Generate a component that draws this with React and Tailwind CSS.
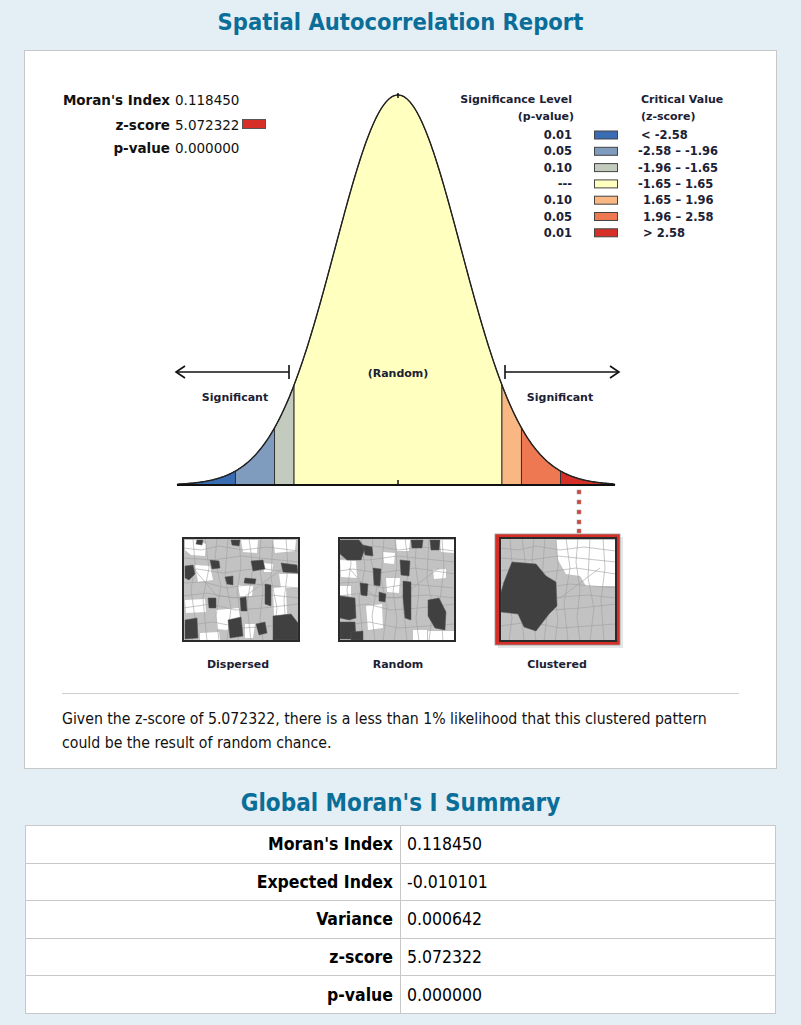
import React from 'react';

// bell curve geometry (page coordinates, svg viewBox starts at the card's content box)
const CX = 398;
const SX = 63;
const BASE = 485;
const PEAK = 390;

const px = (z) => CX + SX * z;
const py = (z) => BASE - PEAK * Math.exp((-z * z) / 2);

const bandPath = (z1, z2) => {
    let d = `M${px(z1)},${BASE} L${px(z1)},${py(z1)}`;
    for (let z = z1; z < z2; z += 0.02) d += ` L${px(z).toFixed(2)},${py(z).toFixed(2)}`;
    d += ` L${px(z2)},${py(z2)} L${px(z2)},${BASE} Z`;
    return d;
};

const curvePath = () => {
    let d = `M${px(-3.5)},${py(-3.5)}`;
    for (let z = -3.5; z <= 3.44; z += 0.02) d += ` L${px(z).toFixed(2)},${py(z).toFixed(2)}`;
    return d;
};

const bands = [
    { from: -3.5, to: -2.58, fill: '#3a6cb4' },
    { from: -2.58, to: -1.96, fill: '#7f9bbd' },
    { from: -1.96, to: -1.65, fill: '#c3cbbf' },
    { from: -1.65, to: 1.65, fill: '#ffffc0' },
    { from: 1.65, to: 1.96, fill: '#f9b784' },
    { from: 1.96, to: 2.58, fill: '#ee7852' },
    { from: 2.58, to: 3.44, fill: '#d62f27' },
];

const legend = [
    { p: '0.01', fill: '#3a6cb4', z: '< -2.58', zx: 641 },
    { p: '0.05', fill: '#7f9bbd', z: '-2.58 – -1.96', zx: 638 },
    { p: '0.10', fill: '#c3cbbf', z: '-1.96 – -1.65', zx: 638 },
    { p: '---', fill: '#ffffc0', z: '-1.65 – 1.65', zx: 638 },
    { p: '0.10', fill: '#f9b784', z: '1.65 – 1.96', zx: 643 },
    { p: '0.05', fill: '#ee7852', z: '1.96 – 2.58', zx: 643 },
    { p: '0.01', fill: '#d62f27', z: '> 2.58', zx: 643 },
];

const toPts = (arr) => arr.map(([x, y]) => `${x},${y}`).join(' ');

// map thumbnails, local coords 0..116 x 0..103
const dispersed = {
    dark: [
        [[48, 2], [57, 2], [56, 8], [49, 7]],
        [[14, 2], [20, 2], [19, 7], [13, 6]],
        [[2, 28], [10, 27], [12, 36], [6, 42], [2, 40]],
        [[27, 22], [36, 23], [37, 30], [29, 31]],
        [[68, 23], [80, 22], [82, 31], [70, 33]],
        [[98, 25], [114, 27], [115, 35], [100, 34]],
        [[42, 39], [50, 38], [50, 47], [44, 46]],
        [[62, 40], [73, 41], [72, 46], [61, 45]],
        [[82, 46], [88, 47], [88, 68], [82, 66]],
        [[25, 60], [33, 60], [33, 70], [26, 70]],
        [[57, 60], [63, 59], [64, 73], [58, 73]],
        [[2, 82], [14, 80], [15, 100], [2, 101]],
        [[45, 82], [58, 79], [60, 98], [47, 100]],
        [[73, 86], [82, 84], [84, 95], [76, 97]],
        [[90, 78], [108, 76], [115, 85], [115, 102], [90, 102]],
    ],
    white: [
        [[2, 2], [12, 2], [23, 6], [22, 18], [8, 17], [2, 12]],
        [[58, 2], [75, 2], [74, 15], [60, 14]],
        [[90, 2], [113, 2], [112, 13], [92, 15]],
        [[12, 27], [27, 28], [30, 42], [15, 44]],
        [[80, 25], [90, 26], [89, 34], [81, 34]],
        [[96, 36], [115, 36], [115, 50], [98, 50]],
        [[90, 50], [103, 49], [104, 76], [91, 78]],
        [[2, 62], [22, 61], [23, 74], [3, 75]],
        [[33, 72], [56, 70], [57, 80], [44, 92], [34, 91]],
        [[55, 47], [70, 48], [69, 58], [57, 58]],
        [[17, 95], [36, 94], [37, 102], [17, 102]],
        [[62, 86], [72, 86], [70, 100], [62, 100]],
    ],
};

const random = {
    dark: [
        [[1, 2], [20, 2], [26, 10], [22, 22], [8, 22], [1, 16]],
        [[24, 7], [33, 9], [34, 18], [26, 17]],
        [[72, 2], [84, 2], [83, 10], [73, 10]],
        [[91, 2], [101, 2], [100, 12], [92, 12]],
        [[34, 30], [42, 31], [41, 48], [35, 47]],
        [[61, 22], [71, 23], [70, 38], [62, 37]],
        [[21, 45], [29, 46], [28, 58], [22, 57]],
        [[40, 54], [47, 56], [46, 64], [40, 63]],
        [[64, 43], [72, 44], [72, 82], [66, 80], [64, 60]],
        [[1, 58], [16, 60], [17, 80], [10, 82], [1, 80]],
        [[1, 84], [16, 84], [17, 101], [1, 101]],
        [[89, 62], [100, 60], [107, 74], [106, 92], [96, 90], [89, 78]],
        [[12, 94], [24, 93], [24, 102], [12, 102]],
    ],
    white: [
        [[57, 2], [71, 2], [70, 13], [58, 13]],
        [[101, 2], [116, 2], [116, 15], [102, 14]],
        [[1, 22], [17, 23], [18, 40], [2, 39]],
        [[47, 40], [61, 40], [60, 55], [48, 54]],
        [[1, 48], [12, 48], [12, 58], [1, 57]],
        [[94, 32], [107, 31], [107, 40], [95, 41]],
        [[27, 68], [43, 66], [44, 90], [29, 92]],
        [[74, 92], [88, 92], [88, 102], [74, 102]],
        [[89, 93], [116, 93], [116, 102], [89, 102]],
        [[44, 14], [56, 15], [55, 26], [45, 25]],
    ],
};

const clustered = {
    dark: [
        [[12, 24], [36, 26], [46, 38], [56, 44], [57, 68], [49, 76], [36, 93], [24, 89], [18, 76], [1, 74], [1, 54], [4, 44], [8, 34]],
    ],
    white: [
        [[56, 2], [115, 2], [115, 48], [86, 48], [80, 38], [66, 36], [58, 22]],
    ],
};

// generic boundary lines drawn on every map
const lines = [
    [[0, 10], [18, 12], [36, 8], [60, 12], [84, 9], [116, 13]],
    [[0, 20], [30, 22], [58, 18], [116, 24]],
    [[0, 33], [14, 31], [40, 35], [76, 30], [116, 36]],
    [[0, 45], [20, 44], [44, 50], [70, 46], [116, 50]],
    [[0, 58], [24, 55], [50, 60], [88, 57], [116, 60]],
    [[0, 70], [28, 66], [52, 72], [80, 70], [116, 66]],
    [[0, 88], [30, 84], [60, 90], [116, 86]],
    [[10, 0], [12, 26], [8, 52], [12, 80], [9, 103]],
    [[22, 0], [26, 30], [20, 60], [24, 103]],
    [[34, 0], [32, 22], [38, 48], [33, 78], [36, 103]],
    [[45, 0], [42, 40], [48, 70], [44, 103]],
    [[56, 0], [58, 28], [54, 54], [58, 82], [55, 103]],
    [[66, 0], [70, 30], [64, 66], [68, 103]],
    [[78, 0], [76, 24], [80, 52], [77, 80], [80, 103]],
    [[90, 0], [88, 40], [94, 70], [90, 103]],
    [[103, 0], [105, 30], [101, 62], [104, 103]],
    [[10, 30], [34, 58], [60, 60], [100, 30]],
];

const MapThumb = ({ x, y, data }) => (
    <g transform={`translate(${x},${y})`}>
        <rect x="0" y="0" width="116" height="103" fill="#c2c2c2" />
        {data.white.map((p, i) => (
            <polygon key={`w${i}`} points={toPts(p)} fill="#ffffff" />
        ))}
        {lines.map((l, i) => (
            <polyline key={`l${i}`} points={toPts(l)} fill="none" stroke="#a0a0a0" strokeWidth="0.6" />
        ))}
        {data.dark.map((p, i) => (
            <polygon key={`d${i}`} points={toPts(p)} fill="#404040" stroke="#555" strokeWidth="0.5" />
        ))}
        <rect x="0" y="0" width="116" height="103" fill="none" stroke="#2a2a2a" strokeWidth="2" />
    </g>
);

const Diagram = () => {
    const ink = '#1b2134';
    return (
        <svg viewBox="25 51 750 642" width="750" height="642" className="block font-['DejaVu_Sans',sans-serif]">
            {/* stats */}
            <g fontSize="13.5" fill="#111">
                <text x="170" y="105" textAnchor="end" fontWeight="bold">Moran's Index</text>
                <text x="175" y="105">0.118450</text>
                <text x="170" y="130" textAnchor="end" fontWeight="bold">z-score</text>
                <text x="175" y="130">5.072322</text>
                <text x="170" y="153" textAnchor="end" fontWeight="bold">p-value</text>
                <text x="175" y="153">0.000000</text>
            </g>
            <rect x="242.5" y="119.5" width="23" height="9" fill="#d62f27" stroke="#555" strokeWidth="1" />

            {/* legend */}
            <g fontSize="11" fontWeight="bold" fill={ink}>
                <text x="572" y="103" textAnchor="end">Significance Level</text>
                <text x="574" y="120" textAnchor="end">(p-value)</text>
                <text x="641" y="103">Critical Value</text>
                <text x="641" y="120">(z-score)</text>
                {legend.map((row, i) => {
                    const cy = 135 + i * 16.3;
                    return (
                        <g key={i}>
                            <text x="572" y={cy + 4} textAnchor="end" fontSize="11.5">{row.p}</text>
                            <rect x="594.5" y={cy - 4} width="23" height="8" fill={row.fill} stroke="#444" strokeWidth="1" />
                            <text x={row.zx} y={cy + 4} fontSize="11.5">{row.z}</text>
                        </g>
                    );
                })}
            </g>

            {/* bell curve */}
            {bands.map((b, i) => (
                <path key={i} d={bandPath(b.from, b.to)} fill={b.fill} stroke="#333" strokeWidth="1" />
            ))}
            <path d={curvePath()} fill="none" stroke="#222" strokeWidth="1.4" />
            <line x1="177" y1="485" x2="615" y2="485" stroke="#111" strokeWidth="2.2" />
            <line x1="398" y1="480" x2="398" y2="485" stroke="#111" strokeWidth="1.5" />
            <line x1="398" y1="93" x2="398" y2="98" stroke="#111" strokeWidth="1.5" />

            {/* arrows */}
            <g stroke="#111" strokeWidth="1.6" fill="none">
                <line x1="177" y1="372" x2="289" y2="372" />
                <line x1="289" y1="365" x2="289" y2="379" />
                <polyline points="185,366 176,372 185,378" />
                <line x1="505" y1="372" x2="618" y2="372" />
                <line x1="505" y1="365" x2="505" y2="379" />
                <polyline points="610,366 619,372 610,378" />
            </g>
            <g fontSize="11" fontWeight="bold" fill={ink} textAnchor="middle">
                <text x="398" y="377">(Random)</text>
                <text x="235" y="401">Significant</text>
                <text x="560" y="401">Significant</text>
            </g>

            {/* dotted link to clustered map */}
            {[490, 500, 510, 520, 529].map((y) => (
                <rect key={y} x="577" y={y} width="4" height="4" fill="#d9453c" stroke="#9a9a9a" strokeWidth="0.5" />
            ))}

            {/* maps */}
            <MapThumb x={183} y={538} data={dispersed} />
            <MapThumb x={339} y={538} data={random} />
            <rect x="498" y="537" width="125" height="111" fill="#e6e6e6" />
            <rect x="495" y="534" width="125" height="111" fill="#d62f27" stroke="#999" strokeWidth="0.8" />
            <MapThumb x={500} y={538} data={clustered} />

            <g fontSize="11" fontWeight="bold" fill={ink} textAnchor="middle">
                <text x="238" y="668">Dispersed</text>
                <text x="398" y="668">Random</text>
                <text x="557" y="668">Clustered</text>
            </g>
        </svg>
    );
};

const summary = [
    ['Moran\'s Index', '0.118450'],
    ['Expected Index', '-0.010101'],
    ['Variance', '0.000642'],
    ['z-score', '5.072322'],
    ['p-value', '0.000000'],
];

const App = () => {
    return (
        <div className="min-h-[1025px] bg-[#e4eff5] font-['DejaVu_Sans_Condensed','DejaVu_Sans',sans-serif] text-black">
            <h1 className="h-[50px] text-center text-[23.5px] leading-[44px] font-bold text-[#0b6e98]">
                Spatial Autocorrelation Report
            </h1>

            <div className="mx-[24px] bg-white border border-[#c8c8c8]">
                <Diagram />
                <div className="mx-[37px] border-t border-[#cfcfcf] pt-[13px] pb-[13px] text-[15.7px] leading-[24px] text-[#111]">
                    Given the z-score of 5.072322, there is a less than 1% likelihood that this clustered pattern
                    could be the result of random chance.
                </div>
            </div>

            <h2 className="pt-[12px] h-[56px] text-center text-[24px] leading-[44px] font-bold text-[#0b6e98]">
                Global Moran's I Summary
            </h2>

            <div className="mx-[25px]">
                <table className="w-full border-collapse bg-white text-[17.5px]">
                    <tbody>
                        {summary.map(([label, value]) => (
                            <tr key={label} className="h-[37.6px]">
                                <td className="w-[375px] border border-[#c8c8c8] pr-[7px] text-right font-bold">{label}</td>
                                <td className="border border-[#c8c8c8] pl-[6px]">{value}</td>
                            </tr>
                        ))}
                    </tbody>
                </table>
            </div>
        </div>
    );
};

export default App;
